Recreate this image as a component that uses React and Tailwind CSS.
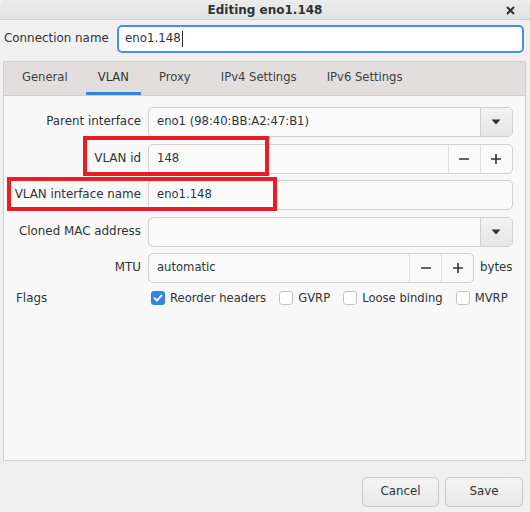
import React from "react";

const font = { fontFamily: '"DejaVu Sans", "Liberation Sans", sans-serif' };

function DropArrow() {
  return (
    <svg width="10" height="6" viewBox="0 0 10 6">
      <path d="M0.5 0.5 L9.5 0.5 L5 5.5 Z" fill="#2e3436" />
    </svg>
  );
}

function Minus() {
  return (
    <svg width="12" height="12" viewBox="0 0 12 12">
      <path d="M1 6 H11" stroke="#2e3436" strokeWidth="1.6" />
    </svg>
  );
}

function Plus() {
  return (
    <svg width="12" height="12" viewBox="0 0 12 12">
      <path d="M1 6 H11 M6 1 V11" stroke="#2e3436" strokeWidth="1.6" />
    </svg>
  );
}

function Combo({ value }) {
  return (
    <div className="flex h-[30px] w-full overflow-hidden rounded-[5px] border border-[#d3cfcb] bg-[#fafafa]">
      <div className="flex flex-1 items-center whitespace-nowrap pl-[8px] text-[11.6px] text-[#2e3436]">{value}</div>
      <div className="flex w-[32px] items-center justify-center border-l border-[#d3cfcb] bg-gradient-to-b from-[#f2f2f2] to-[#e6e6e6]">
        <DropArrow />
      </div>
    </div>
  );
}

function Spin({ value }) {
  return (
    <div className="flex h-[30px] w-full overflow-hidden rounded-[5px] border border-[#d3cfcb] bg-[#fafafa]">
      <div className="flex flex-1 items-center whitespace-nowrap pl-[8px] text-[11.6px] text-[#2e3436]">{value}</div>
      <div className="flex w-[32px] items-center justify-center border-l border-[#e2dedb]">
        <Minus />
      </div>
      <div className="flex w-[32px] items-center justify-center border-l border-[#e2dedb]">
        <Plus />
      </div>
    </div>
  );
}

function Entry({ value }) {
  return (
    <div className="flex h-[30px] w-full items-center whitespace-nowrap rounded-[5px] border border-[#d3cfcb] bg-[#fafafa] pl-[8px] text-[11.6px] text-[#2e3436]">
      {value}
    </div>
  );
}

function Check({ checked, label }) {
  return (
    <div className="flex items-center gap-[5px] whitespace-nowrap">
      {checked ? (
        <div className="flex h-[14px] w-[14px] items-center justify-center rounded-[3px] bg-[#3584e4]">
          <svg width="10" height="10" viewBox="0 0 10 10">
            <path d="M1.5 5.2 L4 7.6 L8.6 2.4" stroke="#ffffff" strokeWidth="1.8" fill="none" strokeLinecap="round" strokeLinejoin="round" />
          </svg>
        </div>
      ) : (
        <div className="h-[14px] w-[14px] rounded-[3px] border border-[#c8c3be] bg-[#ffffff]" />
      )}
      <span className="text-[11.6px] text-[#2e3436]">{label}</span>
    </div>
  );
}

function Label({ children }) {
  return (
    <div className="flex h-[30px] items-center justify-end whitespace-nowrap text-[11.9px] text-[#2e3436]">{children}</div>
  );
}

export default function App() {
  const tabs = ["General", "VLAN", "Proxy", "IPv4 Settings", "IPv6 Settings"];
  return (
    <div className="relative flex h-[512px] w-[530px] flex-col overflow-hidden bg-[#f0f0f0]" style={font}>
      {/* Title bar */}
      <div className="relative flex h-[20px] items-center justify-center rounded-t-[6px] border-b border-[#cfcfcf] bg-gradient-to-b from-[#ececec] to-[#e2e2e2]">
        <span className="text-[12px] font-bold text-[#2e3436]">Editing eno1.148</span>
        <div className="absolute right-[15px] top-[6px]">
          <svg width="9" height="9" viewBox="0 0 9 9">
            <path d="M1 1 L8 8 M8 1 L1 8" stroke="#2e3436" strokeWidth="2" />
          </svg>
        </div>
      </div>

      {/* Connection name */}
      <div className="mt-[5px] flex h-[28px] items-center pl-[4px] pr-[6px]">
        <span className="w-[113px] whitespace-nowrap text-[11.9px] text-[#2e3436]">Connection name</span>
        <div className="flex h-[28px] flex-1 items-center rounded-[5px] border-2 border-[#4a90e2] bg-[#ffffff] pl-[6px] text-[11.8px] text-[#2e3436]">
          <span>eno1.148</span>
          <span className="ml-[1px] h-[16px] w-[1px] bg-[#2e3436]" />
        </div>
      </div>

      {/* Notebook */}
      <div className="ml-[3px] mt-[8px] flex h-[400px] w-[523px] flex-col border border-[#d3cfcb] bg-[#f8f8f8]">
        <div className="flex h-[34px] border-b border-[#d3cfcb] bg-[#e2dede] pl-[3px]">
          {tabs.map((t) => (
            <div key={t} className="mx-[3px] flex flex-col">
              <div
                className={
                  "flex flex-1 items-center whitespace-nowrap px-[12px] pt-[1px] text-[11.6px] " +
                  (t === "VLAN" ? "text-[#2e3436]" : "text-[#3e4143]")
                }
              >
                {t}
              </div>
              <div className={"h-[3px] " + (t === "VLAN" ? "bg-[#3584e4]" : "bg-transparent")} />
            </div>
          ))}
        </div>

        <div className="grid grid-cols-[126px_1fr] gap-x-[7px] gap-y-[6.5px] pl-[11px] pr-[13px] pt-[11px]">
          <Label>Parent interface</Label>
          <Combo value="eno1 (98:40:BB:A2:47:B1)" />

          <Label>VLAN id</Label>
          <Spin value="148" />

          <Label>VLAN interface name</Label>
          <Entry value="eno1.148" />

          <Label>Cloned MAC address</Label>
          <Combo value="" />

          <Label>MTU</Label>
          <div className="flex items-center gap-[6px]">
            <div className="w-[326px]">
              <Spin value="automatic" />
            </div>
            <span className="text-[11.8px] text-[#2e3436]">bytes</span>
          </div>

          <div className="flex h-[18px] items-center pl-[1px] text-[11.9px] text-[#2e3436]">Flags</div>
          <div className="flex h-[18px] items-center gap-[13px] pl-[3px]">
            <Check checked label="Reorder headers" />
            <Check label="GVRP" />
            <Check label="Loose binding" />
            <Check label="MVRP" />
          </div>
        </div>
      </div>

      {/* Buttons */}
      <div className="mt-[16px] flex justify-end gap-[6px] pr-[7px]">
        <div className="flex h-[30px] w-[77px] items-center justify-center rounded-[5px] border border-[#cdc7c2] bg-gradient-to-b from-[#f4f4f4] to-[#e8e8e8] text-[11.8px] text-[#2e3436]">
          Cancel
        </div>
        <div className="flex h-[30px] w-[78px] items-center justify-center rounded-[5px] border border-[#cdc7c2] bg-gradient-to-b from-[#f4f4f4] to-[#e8e8e8] text-[11.8px] text-[#2e3436]">
          Save
        </div>
      </div>

      {/* Annotation boxes */}
      <div className="absolute left-[83px] top-[136px] h-[40px] w-[186px] border-[4px] border-[#ec1c24]" />
      <div className="absolute left-[7px] top-[177px] h-[34px] w-[270px] border-[4px] border-[#ec1c24]" />
    </div>
  );
}
